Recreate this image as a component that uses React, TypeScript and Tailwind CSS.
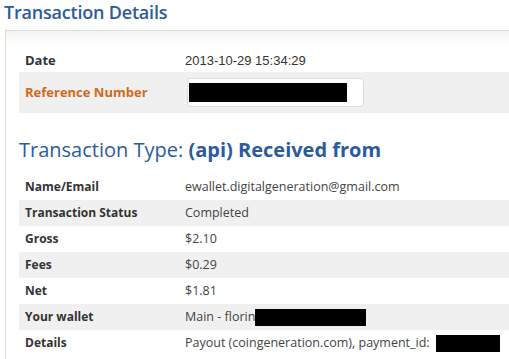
import React from 'react';

const rows: { label: string; value: React.ReactNode; shaded: boolean }[] = [
  { label: 'Name/Email', value: 'ewallet.digitalgeneration@gmail.com', shaded: false },
  { label: 'Transaction Status', value: 'Completed', shaded: true },
  { label: 'Gross', value: '$2.10', shaded: false },
  { label: 'Fees', value: '$0.29', shaded: true },
  { label: 'Net', value: '$1.81', shaded: false },
  {
    label: 'Your wallet',
    value: (
      <span className="flex items-center">
        Main - florin
        <span className="inline-block w-[111px] h-[17px] bg-black" />
      </span>
    ),
    shaded: true,
  },
  {
    label: 'Details',
    value: (
      <span className="flex items-center">
        Payout (coingeneration.com), payment_id:&nbsp;&nbsp;
        <span className="inline-block w-[64px] h-[17px] bg-black" />
      </span>
    ),
    shaded: false,
  },
];

const App: React.FC = () => {
  return (
    <div className="w-[509px] h-[359px] overflow-hidden bg-white font-['Open_Sans',sans-serif]">
      {/* Page title */}
      <h1 className="pl-[4px] h-[30px] text-[18px] leading-[24px] text-[#2b5b9c] font-semibold tracking-[-0.2px]">
        Transaction Details
      </h1>

      {/* Panel */}
      <div className="ml-[5px] border-l border-t border-[#dddcd3] h-[329px] bg-gradient-to-b from-[#f3f3f1] to-white to-[14px] pl-[13px]">
        {/* Summary table */}
        <div className="pt-[18px]">
          <div className="flex items-center h-[23px] pl-[6px] text-[13px]">
            <span className="w-[160px] font-bold text-[#333]">Date</span>
            <span className="font-['Liberation_Sans',sans-serif] text-[#333]">2013-10-29 15:34:29</span>
          </div>
          <div className="flex items-center h-[41px] pl-[6px] bg-[#f0f0f0] text-[13px]">
            <span className="w-[162px] font-bold text-[#d2691a]">Reference Number</span>
            <span className="w-[177px] h-[29px] bg-white border border-[#ddddd5] rounded-[3px] flex items-center pl-[1px]">
              <span className="w-[158px] h-[19px] bg-black" />
            </span>
          </div>
        </div>

        {/* Transaction type */}
        <h2 className="mt-[23px] text-[20px] leading-[28px] text-[#2b5b9c] font-medium">
          Transaction Type: <span className="font-bold">(api) Received from</span>
        </h2>

        <div className="mt-[10px]">
          {rows.map((r) => (
            <div
              key={r.label}
              className={`flex items-center h-[26px] pl-[6px] text-[12.5px] ${r.shaded ? 'bg-[#f0f0f0]' : ''}`}
            >
              <span className="w-[160px] shrink-0 font-bold text-[#333] text-[12px]">{r.label}</span>
              <span className="text-[#444] whitespace-nowrap">{r.value}</span>
            </div>
          ))}
        </div>
      </div>
    </div>
  );
};

export default App;
